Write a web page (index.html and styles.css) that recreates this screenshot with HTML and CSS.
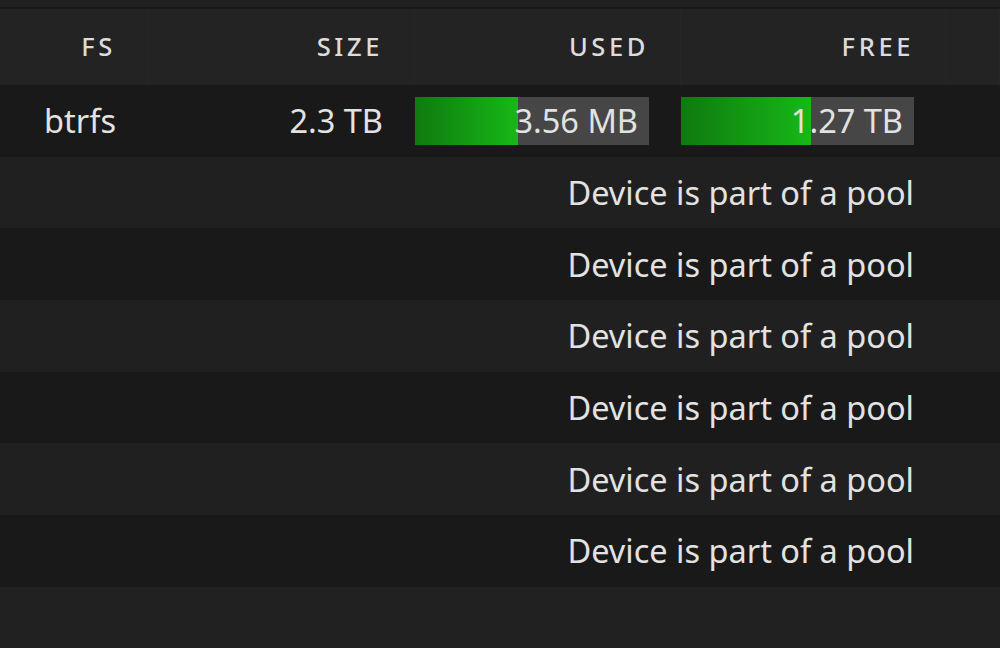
FILE: index.html
```html
<!DOCTYPE html>
<html lang="en">
<head>
  <meta charset="UTF-8" />
  <title>Disks</title>
  <link rel="stylesheet" href="styles.css">
</head>
<body>
  <div class="topbar"></div>
  <div class="table">
    <div class="head">
      <div class="th">FS</div>
      <div class="th">SIZE</div>
      <div class="th">USED</div>
      <div class="th">FREE</div>
      <div class="th"></div>
    </div>

    <div class="row dark">
      <div class="td">btrfs</div>
      <div class="td">2.3 TB</div>
      <div class="td">
        <div class="bar"><div class="fill" style="width: 44%"></div><span>3.56 MB</span></div>
      </div>
      <div class="td">
        <div class="bar"><div class="fill" style="width: 56%"></div><span>1.27 TB</span></div>
      </div>
      <div class="td"></div>
    </div>

    <div class="row light"><div class="note">Device is part of a pool</div></div>
    <div class="row dark"><div class="note">Device is part of a pool</div></div>
    <div class="row light"><div class="note">Device is part of a pool</div></div>
    <div class="row dark"><div class="note">Device is part of a pool</div></div>
    <div class="row light"><div class="note">Device is part of a pool</div></div>
    <div class="row dark"><div class="note">Device is part of a pool</div></div>
  </div>
</body>
</html>
```

FILE: styles.css
```css
body {
  margin: 0;
  background: #212121;
  color: #e2e2e2;
  font-family: "Noto Sans", "Open Sans", sans-serif;
  overflow: hidden;
}

.topbar {
  height: 7px;
  background: #212121;
  border-bottom: 2px solid #1a1a1a;
}

.head,
.row {
  display: grid;
  grid-template-columns: 148px 267px 266px 265px 1fr;
}

.head {
  height: 76px;
  background: #232323;
}

.th {
  display: flex;
  align-items: center;
  justify-content: flex-end;
  padding-right: 31px;
  padding-bottom: 3px;
  font-size: 25.5px;
  font-weight: 500;
  letter-spacing: 3.6px;
  color: #dcdcdc;
  border-right: 1px solid #262626;
}

.row {
  height: 71.7px;
}

.row.dark {
  background: #191919;
}

.row.light {
  background: #202020;
}

.td {
  display: flex;
  align-items: center;
  justify-content: flex-end;
  padding-right: 32px;
  font-size: 32.5px;
}

.bar {
  position: relative;
  width: 235px;
  height: 48px;
  background: #464646;
  display: flex;
  align-items: center;
  justify-content: flex-end;
}

.fill {
  position: absolute;
  left: 0;
  top: 0;
  bottom: 0;
  background: linear-gradient(to right, #0f7a0f, #17b817);
}

.bar span {
  position: relative;
  padding-right: 11px;
}

.note {
  grid-column: 1 / 5;
  display: flex;
  align-items: center;
  justify-content: flex-end;
  padding-right: 32px;
  font-size: 32.5px;
}
```
